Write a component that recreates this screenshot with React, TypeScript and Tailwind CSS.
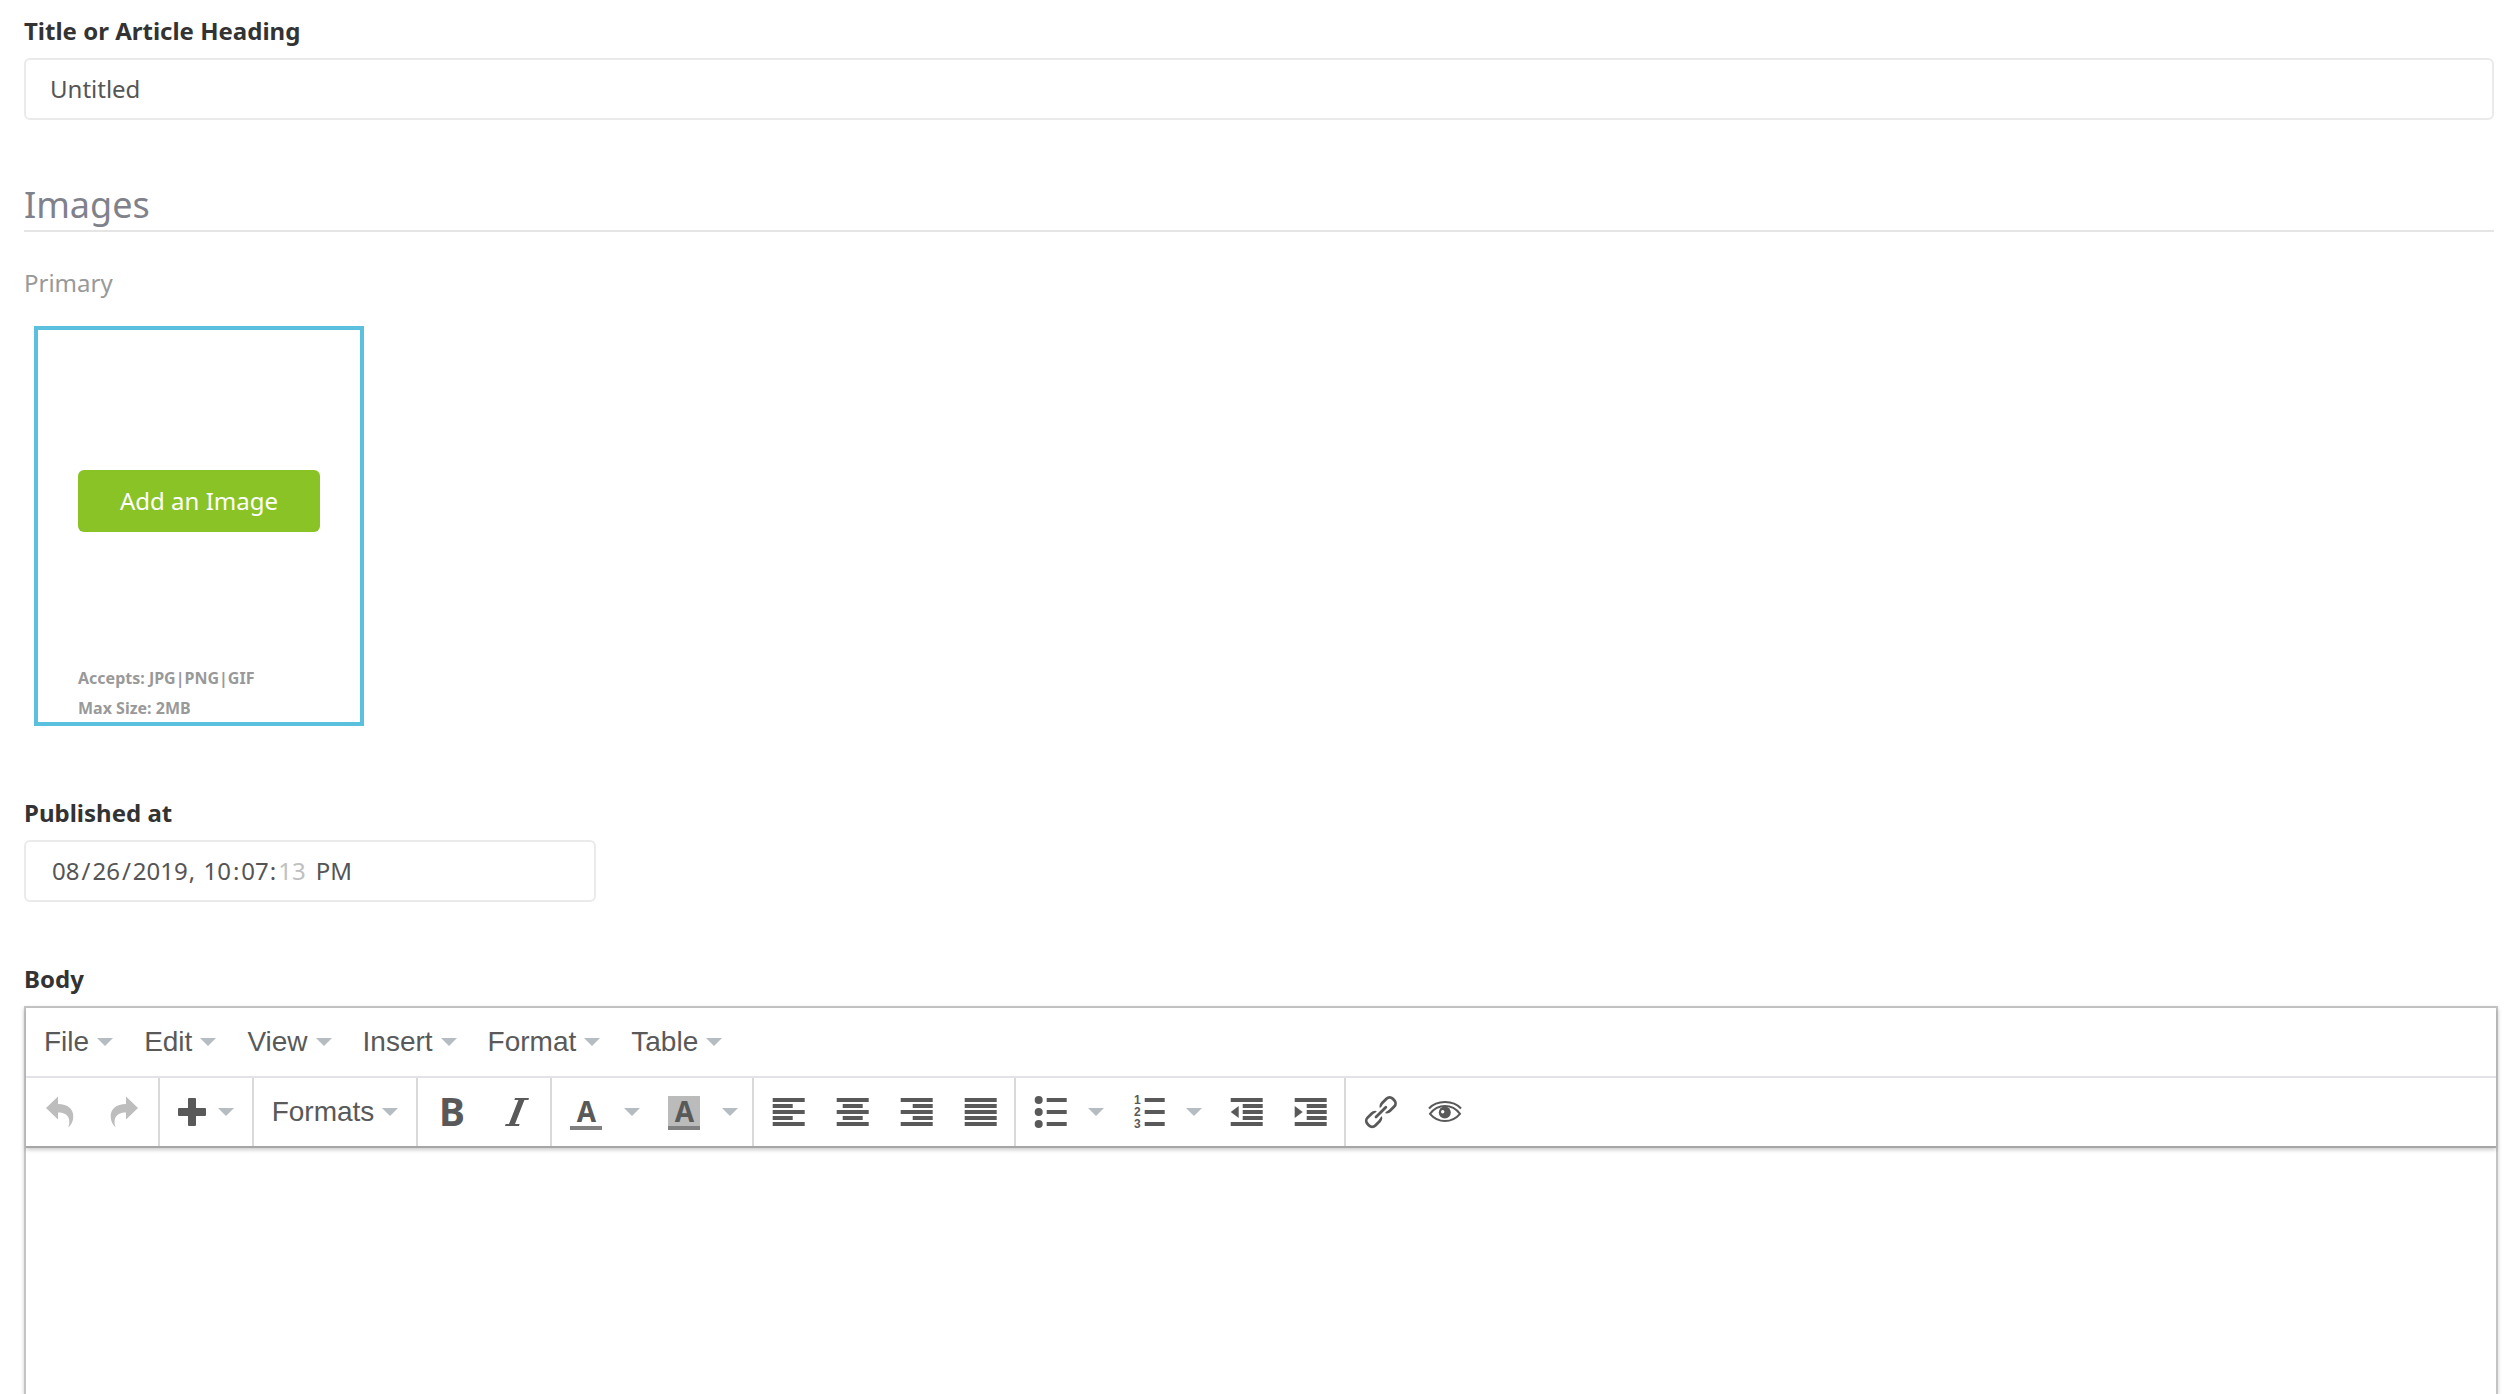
import React from "react";

type IconProps = { children: React.ReactNode };

const Icon: React.FC<IconProps> = ({ children }) => (
  <svg
    width="32"
    height="32"
    viewBox="0 0 32 32"
    fill="#595959"
    className="block shrink-0 overflow-visible"
    aria-hidden="true"
  >
    {children}
  </svg>
);

// each bar is [x, y, width]
const Bars: React.FC<{ bars: number[][] }> = ({ bars }) => (
  <>
    {bars.map(([x, y, w]) => (
      <rect key={y} x={x + 0.7} y={y} width={w} height="4" />
    ))}
  </>
);

const Caret: React.FC = () => (
  <svg
    width="16"
    height="8"
    viewBox="0 0 16 8"
    fill="#b5bcc2"
    className="block shrink-0"
    aria-hidden="true"
  >
    <path d="M0 0h16l-8 8z" />
  </svg>
);

const menus: string[] = ["File", "Edit", "View", "Insert", "Format", "Table"];

const labelClass = "block text-[24px] leading-[36px] font-bold text-[#333] mb-[9px]";
const fieldClass =
  "block h-[62px] rounded-[6px] border-2 border-[#eaeaea] bg-white px-6 text-[24px] text-[#555]";

// spacing of the date segments, and the dimmed seconds
const dateClass =
  "[&::-webkit-calendar-picker-indicator]:hidden [&::-webkit-datetime-edit-month-field]:px-0.5 [&::-webkit-datetime-edit-day-field]:px-0.5 [&::-webkit-datetime-edit-year-field]:pl-0.5 [&::-webkit-datetime-edit-hour-field]:px-0.5 [&::-webkit-datetime-edit-minute-field]:pl-0.5 [&::-webkit-datetime-edit-second-field]:px-0.5 [&::-webkit-datetime-edit-second-field]:text-[#c0c0c0] [&::-webkit-datetime-edit-ampm-field]:pl-1";

const Group: React.FC<{ children: React.ReactNode }> = ({ children }) => (
  <div className="flex items-center gap-1 border-r-2 border-[#d9d9d9] px-1 last:border-r-0">
    {children}
  </div>
);

const IconButton: React.FC<{ label: string; children: React.ReactNode }> = ({
  label,
  children,
}) => (
  <button type="button" aria-label={label} className="flex h-15 w-15 items-center justify-center">
    <Icon>{children}</Icon>
  </button>
);

const SplitButton: React.FC<{ label: string; children: React.ReactNode }> = ({
  label,
  children,
}) => (
  <button
    type="button"
    aria-label={label}
    className="flex h-15 items-center gap-[22px] pr-[10px] pl-[14px]"
  >
    <Icon>{children}</Icon>
    <Caret />
  </button>
);

const Toolbar: React.FC = () => (
  <div className="flex h-[68px]" role="toolbar" aria-label="Formatting">
    <Group>
      <IconButton label="Undo">
        <path
          fill="#bdbdbd"
          d="M2 12 14 .5V8c10 0 15.300 5 15.300 12.500 0 4.500-2 8.500-5 11C27 24 25 16.500 14 16.500v7z"
        />
      </IconButton>
      <IconButton label="Redo">
        <path
          fill="#bdbdbd"
          d="M30 12 18 .5V8C8 8 2.700 13 2.700 20.500c0 4.500 2 8.500 5 11C5 24 7 16.500 18 16.500v7z"
        />
      </IconButton>
    </Group>
    <Group>
      <button
        type="button"
        aria-label="Insert"
        className="flex h-15 items-center gap-[10px] pr-[14px] pl-3"
      >
        <Icon>
          <path d="M13 2h6q1 0 1 1v9h9q1 0 1 1v6q0 1-1 1h-9v9q0 1-1 1h-6q-1 0-1-1v-9H3q-1 0-1-1v-6q0-1 1-1h9V3q0-1 1-1z" />
        </Icon>
        <Caret />
      </button>
    </Group>
    <Group>
      <button
        type="button"
        className="flex h-15 w-[154px] items-center justify-center gap-2 text-[28px]"
      >
        Formats
        <Caret />
      </button>
    </Group>
    <Group>
      <IconButton label="Bold">
        <text x="16" y="30" textAnchor="middle" fontSize="39" fontWeight="700" fontFamily="Noto Sans, sans-serif">
          B
        </text>
      </IconButton>
      <IconButton label="Italic">
        <path d="M15 2h14l-.6 2h-4L15 28h4.600l-.6 2H5l.6-2H9l9.400-24h-4z" />
      </IconButton>
    </Group>
    <Group>
      <SplitButton label="Text color">
        <text x="16.500" y="26" textAnchor="middle" fontSize="28" fontWeight="700" fontFamily="Noto Sans, sans-serif">
          A
        </text>
        <rect y="30" width="32" height="4" fill="#808080" />
      </SplitButton>
      <SplitButton label="Background color">
        <rect width="32" height="34" fill="#bbb" />
        <text x="16.500" y="26" textAnchor="middle" fontSize="28" fontWeight="700" fontFamily="Noto Sans, sans-serif">
          A
        </text>
        <rect y="30" width="32" height="4" fill="#808080" />
      </SplitButton>
    </Group>
    <Group>
      <IconButton label="Align left">
        <Bars bars={[[0, 2, 32], [0, 8, 20], [0, 14, 32], [0, 20, 20], [0, 26, 32]]} />
      </IconButton>
      <IconButton label="Align center">
        <Bars bars={[[0, 2, 32], [6, 8, 20], [0, 14, 32], [6, 20, 20], [0, 26, 32]]} />
      </IconButton>
      <IconButton label="Align right">
        <Bars bars={[[0, 2, 32], [12, 8, 20], [0, 14, 32], [12, 20, 20], [0, 26, 32]]} />
      </IconButton>
      <IconButton label="Justify">
        <Bars bars={[[0, 2, 32], [0, 8, 32], [0, 14, 32], [0, 20, 32], [0, 26, 32]]} />
      </IconButton>
    </Group>
    <Group>
      <SplitButton label="Bullet list">
        <circle cx="4.700" cy="4" r="4" />
        <circle cx="4.700" cy="16" r="4" />
        <circle cx="4.700" cy="28" r="4" />
        <Bars bars={[[12, 2, 20], [12, 14, 20], [12, 26, 20]]} />
      </SplitButton>
      <SplitButton label="Numbered list">
        <g fontSize="12" fontWeight="700" fontFamily="Liberation Sans, sans-serif">
          <text x="2" y="8">1</text>
          <text x="2" y="20">2</text>
          <text x="2" y="32">3</text>
        </g>
        <Bars bars={[[12, 2, 20], [12, 14, 20], [12, 26, 20]]} />
      </SplitButton>
      <IconButton label="Decrease indent">
        <Bars bars={[[0, 2, 32], [12, 8, 20], [12, 14, 20], [12, 20, 20], [0, 26, 32]]} />
        <path d="M.7 16l8-6v12z" />
      </IconButton>
      <IconButton label="Increase indent">
        <Bars bars={[[0, 2, 32], [12, 8, 20], [12, 14, 20], [12, 20, 20], [0, 26, 32]]} />
        <path d="M8.700 16l-8-6v12z" />
      </IconButton>
    </Group>
    <Group>
      <IconButton label="Insert link">
        <g fill="none" stroke="#595959" strokeWidth="2.800" strokeLinecap="round">
          <rect x="-7.500" y="-5.500" width="15" height="11" rx="4.500" transform="translate(24.200 8.800) rotate(-45)" />
          <rect x="-7.500" y="-5.500" width="15" height="11" rx="4.500" transform="translate(9.600 23.400) rotate(-45)" />
          <path d="M12.500 20.500l9-9" stroke="#fff" strokeWidth="7" strokeLinecap="butt" />
          <path d="M12 21l9.800-9.800" />
        </g>
      </IconButton>
      <IconButton label="Preview">
        <g fill="none" stroke="#595959" strokeWidth="2">
          <path d="M1 12.500C5 8 10.500 6 17 6s12 2 16 6.500" />
          <path d="M2 17.800C6 12.500 11 10 17 10s11 2.500 15 7.800C28 22.500 23 25 17 25S6 22.500 2 17.800z" />
        </g>
        <circle cx="16.800" cy="16.500" r="6" />
        <circle cx="14.700" cy="15.700" r="1.700" fill="#fff" />
      </IconButton>
    </Group>
  </div>
);

const App: React.FC = () => {
  return (
    <form className="flex min-h-screen flex-col bg-white px-6 pt-[13px] font-['Noto_Sans',sans-serif]">
      <label htmlFor="title" className={labelClass}>
        Title or Article Heading
      </label>
      <input
        id="title"
        type="text"
        defaultValue="Untitled"
        className={`${fieldClass} w-full pb-0.5`}
      />

      <h2 className="mt-[61px] border-b-2 border-[#e5e5e5] pb-px text-[36px] leading-[48px] text-[#7f828b]">
        Images
      </h2>
      <p className="mt-[33px] text-[24px] leading-[36px] text-[#999]">Primary</p>
      <div className="mt-[25px] ml-[10px] h-[400px] w-[330px] border-4 border-[#5bc0de] px-10 pt-[140px]">
        <button
          type="button"
          className="block h-[62px] w-full rounded-[6px] bg-[#89c325] text-[24px] text-white"
        >
          Add an Image
        </button>
        <p className="mt-[131px] text-[16px] leading-[30px] font-bold text-[#999]">
          Accepts: JPG|PNG|GIF
          <br />
          Max Size: 2MB
        </p>
      </div>

      <label htmlFor="published" className={`${labelClass} mt-[69px]`}>
        Published at
      </label>
      <input
        id="published"
        type="datetime-local"
        defaultValue="2019-08-26T22:07:13"
        className={`${fieldClass} ${dateClass} w-[572px] max-w-full`}
      />

      <label htmlFor="body" className={`${labelClass} mt-[59px]`}>
        Body
      </label>
      <div className="-mr-1 flex flex-1 flex-col border-2 border-b-0 border-[#c4c4c4] shadow-[0_2px_4px_rgba(0,0,0,0.2)]">
        <div className="relative border-b-2 border-[#a6a6a6] font-['Liberation_Sans',sans-serif] text-[#595959] shadow-[0_2px_4px_rgba(0,0,0,0.2)]">
          <div className="flex h-[70px] items-center gap-[3px] border-b-2 border-[#e2e2e8] pl-1">
            {menus.map((menu) => (
              <button
                key={menu}
                type="button"
                className="flex h-15 items-center gap-2 px-[14px] text-[28px]"
              >
                {menu}
                <Caret />
              </button>
            ))}
          </div>
          <Toolbar />
        </div>
        <textarea id="body" className="min-h-[240px] w-full flex-1 resize-none p-4 outline-none" />
      </div>
    </form>
  );
};

export default App;
